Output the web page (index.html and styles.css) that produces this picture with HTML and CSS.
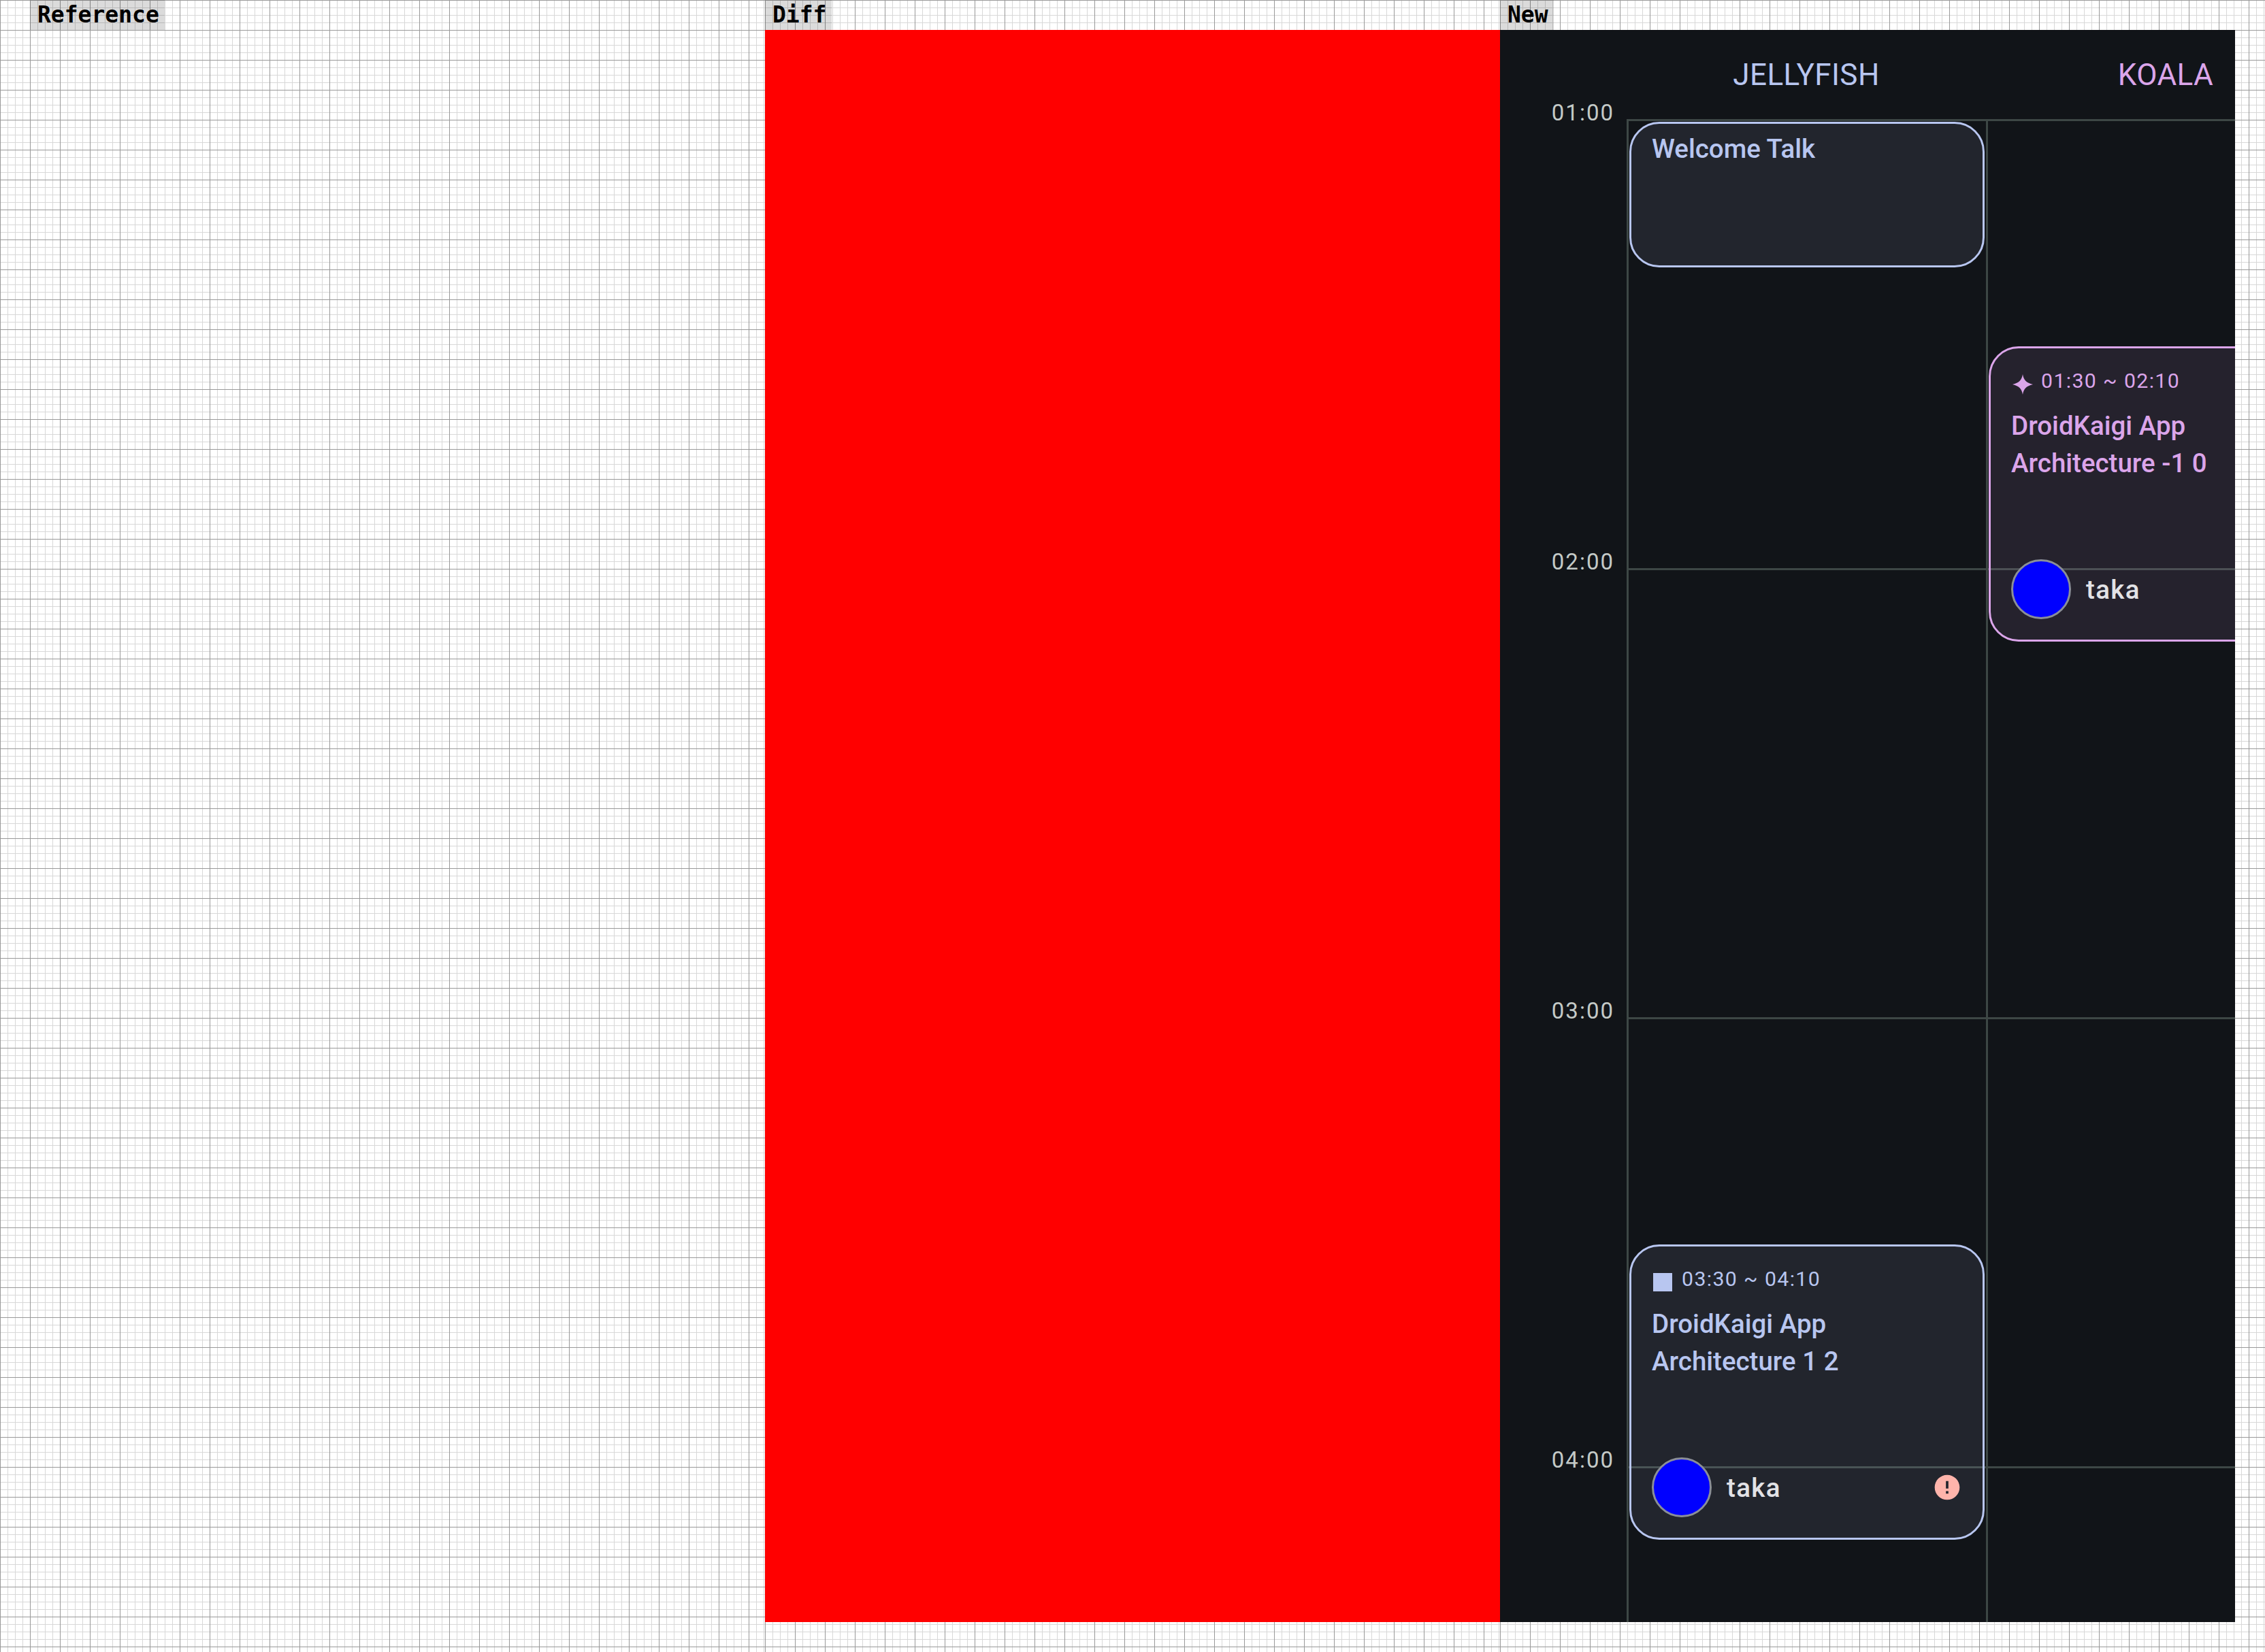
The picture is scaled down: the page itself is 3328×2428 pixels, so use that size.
FILE: index.html
```html
<!DOCTYPE html>
<html lang="en">
<head>
<meta charset="utf-8">
<title>Timetable screenshot comparison</title>
<link rel="stylesheet" href="styles.css">
</head>
<body>
<main class="compare">
  <section class="pane pane-ref">
    <div class="label">Reference</div>
  </section>
  <section class="pane pane-diff">
    <div class="label">Diff</div>
    <div class="shot shot-diff"></div>
  </section>
  <section class="pane pane-new">
    <div class="label">New</div>
    <div class="shot timetable">
      <header class="rooms">
        <div class="room room-jelly">JELLYFISH</div>
        <div class="room room-koala">KOALA</div>
      </header>
      <div class="schedule">
        <div class="hours">
          <div class="hour">01:00</div>
          <div class="hour">02:00</div>
          <div class="hour">03:00</div>
          <div class="hour">04:00</div>
        </div>
        <div class="board">
          <div class="column">
            <article class="card card-jelly card-short slot-welcome">
              <h3 class="title">Welcome Talk</h3>
            </article>
            <article class="card card-jelly slot-arch12">
              <div class="meta">
                <span class="meta-icon"><svg viewBox="0 0 33 33" class="glyph"><rect x="2" y="3" width="28" height="27"/></svg></span>
                <span class="time">03:30 ~ 04:10</span>
              </div>
              <h3 class="title">DroidKaigi App<br>Architecture 1 2</h3>
              <div class="speaker">
                <span class="avatar"></span>
                <span class="name">taka</span>
                <svg class="warning" viewBox="0 0 24 24"><path d="M12 2C6.48 2 2 6.48 2 12s4.48 10 10 10 10-4.48 10-10S17.52 2 12 2zm1 15h-2v-2h2v2zm0-4h-2V7h2v6z"/></svg>
              </div>
            </article>
          </div>
          <div class="column">
            <article class="card card-koala slot-arch10">
              <div class="meta">
                <span class="meta-icon"><svg viewBox="0 0 33 33" class="glyph"><path d="M17 2 C18.4 10.5 22 14.6 32 17 C22 19.4 18.4 23.5 17 32 C15.6 23.5 12 19.4 2 17 C12 14.6 15.6 10.5 17 2 Z"/></svg></span>
                <span class="time">01:30 ~ 02:10</span>
              </div>
              <h3 class="title">DroidKaigi App<br>Architecture -1 0</h3>
              <div class="speaker">
                <span class="avatar"></span>
                <span class="name">taka</span>
              </div>
            </article>
          </div>
        </div>
      </div>
    </div>
  </section>
</main>
</body>
</html>
```
FILE: styles.css
```css
* { box-sizing: border-box; margin: 0; padding: 0; }

html, body { width: 3328px; height: 2428px; background: #fff; overflow: hidden; }

.compare { display: flex; align-items: flex-start; height: 2428px; }

.pane {
  height: 2428px;
  flex: none;
  background-image:
    linear-gradient(#999 1px, transparent 1px),
    linear-gradient(90deg, #999 1px, transparent 1px),
    linear-gradient(#d8d8d8 1px, transparent 1px),
    linear-gradient(90deg, #d8d8d8 1px, transparent 1px);
  background-size: 44px 44px, 44px 44px, 11px 11px, 11px 11px;
}
.pane-ref { width: 1124px; padding-left: 44px; }
.pane-diff { width: 1080px; }
.pane-new { width: 1124px; padding-right: 44px; }

.label {
  display: block;
  width: fit-content;
  height: 44px;
  padding: 0 8px 0 11px;
  background: rgba(0, 0, 0, 0.14);
  color: #000;
  font: 700 33px/43px "DejaVu Sans Mono", monospace;
}

.shot { width: 1080px; height: 2340px; }
.shot-diff { background: #f00; }

.timetable {
  display: flex;
  flex-direction: column;
  overflow: hidden;
  background: #111418;
  font-family: Roboto, sans-serif;
}

.rooms {
  display: flex;
  flex: none;
  height: 131px;
  padding-left: 186px;
  padding-top: 36px;
}
.room {
  flex: none;
  width: 528px;
  text-align: center;
  font-size: 44px;
  line-height: 60px;
  font-weight: 400;
  letter-spacing: 0.4px;
}
.room-jelly { color: #b8c6f0; }
.room-koala { color: #dba5ea; }

.schedule { display: flex; flex: 1; min-height: 0; }

.hours { flex: none; width: 186px; margin-top: -31px; }
.hour {
  height: 660px;
  padding-right: 18px;
  text-align: right;
  font-size: 33px;
  line-height: 44px;
  letter-spacing: 2px;
  color: #c4cac7;
}

.board {
  display: flex;
  flex: none;
  background-image: linear-gradient(#3d4745 3px, transparent 3px);
  background-size: 100% 660px;
}
.column {
  flex: none;
  width: 528px;
  display: grid;
  grid-template-rows: repeat(21, 110px);
  border-left: 3px solid #3d4745;
}

.card {
  display: flex;
  flex-direction: column;
  min-width: 0;
  margin: 4px 2px 2px 1px;
  padding: 30px;
  border: 3px solid;
  border-radius: 44px;
}
.card-short { padding-top: 9px; }
.card-jelly { color: #b8c6f0; background: rgba(184, 198, 240, 0.1); }
.card-koala { color: #dba5ea; background: rgba(219, 165, 234, 0.1); }

.slot-welcome { grid-row: 1 / span 2; }
.slot-arch10 { grid-row: 4 / span 4; }
.slot-arch12 { grid-row: 16 / span 4; }

.meta { display: flex; align-items: flex-start; flex: none; height: 39px; gap: 11px; }
.meta-icon { flex: none; width: 33px; height: 33px; margin-top: 6px; }
.glyph { display: block; width: 33px; height: 33px; fill: currentColor; }
.time {
  font-size: 30.25px;
  line-height: 35px;
  letter-spacing: 1.375px;
}

.title {
  font-size: 38.5px;
  line-height: 55px;
  font-weight: 500;
}
.meta + .title { margin-top: 16.5px; }

.speaker { display: flex; align-items: center; gap: 22px; margin-top: auto; }
.avatar {
  flex: none;
  width: 88px;
  height: 88px;
  border-radius: 50%;
  border: 3px solid #8a8e98;
  background: #00f;
}
.name {
  flex: 1;
  font-size: 38.5px;
  font-weight: 500;
  letter-spacing: 1.375px;
  color: #e2e2e6;
}
.warning { flex: none; width: 44px; height: 44px; fill: #ffb4ab; }
```
